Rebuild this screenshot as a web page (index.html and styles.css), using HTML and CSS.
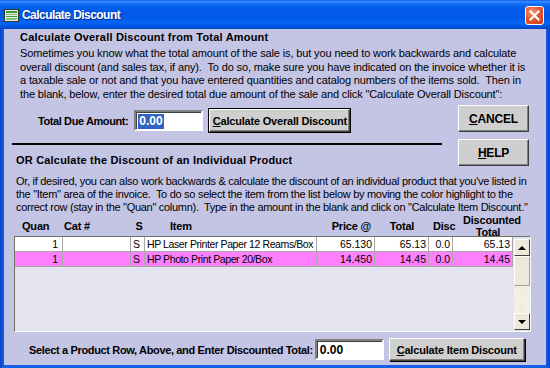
FILE: index.html
```html
<!DOCTYPE html>
<html lang="en">
<head>
  <meta charset="UTF-8">
  <title>Calculate Discount</title>
  <link rel="stylesheet" href="styles.css">
</head>
<body>
  <div class="window">
    <div class="titlebar">
      <svg class="app-icon" width="15" height="13" viewBox="0 0 15 13">
        <rect x="0.5" y="0.5" width="14" height="12" fill="#e8f0e0" stroke="#2a3a2a"/>
        <rect x="2" y="2" width="11" height="2" fill="#3c9a3c"/>
        <rect x="2" y="5" width="11" height="1" fill="#7cc07c"/>
        <rect x="2" y="7" width="11" height="1" fill="#3c9a3c"/>
        <rect x="2" y="9" width="11" height="2" fill="#7cc07c"/>
      </svg>
      <span class="title">Calculate Discount</span>
      <div class="close">
        <svg width="11" height="11" viewBox="0 0 11 11">
          <path d="M1.5 1.5 L9.5 9.5 M9.5 1.5 L1.5 9.5" stroke="#fff" stroke-width="2.2" stroke-linecap="square"/>
        </svg>
      </div>
    </div>

    <div class="client">
      <h1 class="heading heading-top">Calculate Overall Discount from Total Amount</h1>
      <p class="intro intro-top">
        Sometimes you know what the total amount of the sale is, but you need to work backwards and calculate<br>
        overall discount (and sales tax, if any).&nbsp; To do so, make sure you have indicated on the invoice whether it is<br>
        a taxable sale or not and that you have entered quantities and catalog numbers of the items sold.&nbsp; Then in<br>
        the blank, below, enter the desired total due amount of the sale and click "Calculate Overall Discount":
      </p>

      <div class="middle">
        <div class="middle-left">
          <div class="due-row">
            <span class="field-label">Total Due Amount:</span>
            <div class="field"><span class="selected">0.00</span></div>
            <button class="btn btn-default"><u>C</u>alculate Overall Discount</button>
          </div>
          <div class="separator"></div>
          <h2 class="heading heading-item">OR Calculate the Discount of an Individual Product</h2>
        </div>
        <div class="side-buttons">
          <button class="btn btn-side"><u>C</u>ANCEL</button>
          <button class="btn btn-side"><u>H</u>ELP</button>
        </div>
      </div>

      <p class="intro intro-item">
        Or, if desired, you can also work backwards &amp; calculate the discount of an individual product that you've listed in<br>
        the "Item" area of the invoice.&nbsp; To do so select the item from the list below by moving the color highlight to the<br>
        correct row (stay in the "Quan" column).&nbsp; Type in the amount in the blank and click on "Calculate Item Discount."
      </p>

      <div class="grid-head">
        <span class="col-quan">Quan</span>
        <span class="col-cat">Cat #</span>
        <span class="col-s">S</span>
        <span class="col-item">Item</span>
        <span class="col-price">Price @</span>
        <span class="col-total">Total</span>
        <span class="col-disc">Disc</span>
        <span class="col-dtotal">Discounted<br>Total</span>
      </div>

      <div class="list">
        <div class="rows">
          <div class="row">
            <span class="cell num">1</span>
            <span class="cell"></span>
            <span class="cell">S</span>
            <span class="cell">HP Laser Printer Paper 12 Reams/Box</span>
            <span class="cell num">65.130</span>
            <span class="cell num">65.13</span>
            <span class="cell num">0.0</span>
            <span class="cell num">65.13</span>
          </div>
          <div class="row row-selected">
            <span class="cell num">1</span>
            <span class="cell"></span>
            <span class="cell">S</span>
            <span class="cell">HP Photo Print Paper 20/Box</span>
            <span class="cell num">14.450</span>
            <span class="cell num">14.45</span>
            <span class="cell num">0.0</span>
            <span class="cell num">14.45</span>
          </div>
        </div>
        <div class="scrollbar">
          <div class="scroll-btn"><span class="arrow-up"></span></div>
          <div class="scroll-thumb"></div>
          <div class="scroll-track"></div>
          <div class="scroll-btn"><span class="arrow-down"></span></div>
        </div>
      </div>

      <div class="bottom-row">
        <span class="field-label">Select a Product Row, Above, and Enter Discounted Total:</span>
        <div class="field field-plain">0.00</div>
        <button class="btn btn-item"><u>C</u>alculate Item Discount</button>
      </div>
    </div>
  </div>
</body>
</html>
```

FILE: styles.css
```css
* {
  margin: 0;
  padding: 0;
  box-sizing: border-box;
}

body {
  font-family: "Liberation Sans", Arial, sans-serif;
  font-size: 11px;
  color: #000;
  background: #fff;
}

.window {
  width: 550px;
  height: 368px;
  display: flex;
  flex-direction: column;
  background: linear-gradient(90deg, #0842c8 0px, #1660e8 4px, #1660e8 546px, #0842c8 550px);
}

/* title bar */
.titlebar {
  height: 29px;
  display: flex;
  align-items: center;
  padding: 0 6px 0 4px;
  background: linear-gradient(#0a5ae8 0%, #3a8cff 6%, #1672f8 12%, #0462ee 20%, #0058e6 40%, #005ae9 60%, #0664f5 78%, #0058e4 90%, #0046c0 100%);
}

.app-icon {
  margin-right: 3px;
  margin-top: 1px;
}

.title {
  flex: 1;
  color: #fff;
  font-weight: bold;
  font-size: 12px;
  letter-spacing: -0.55px;
  text-shadow: 1px 1px #0a2a8a;
}

.close {
  width: 19px;
  height: 19px;
  margin-top: 1px;
  border: 1px solid #fff;
  border-radius: 3px;
  background: radial-gradient(circle at 35% 30%, #f59a7a 0%, #e5562e 45%, #c8401c 100%);
  display: flex;
  align-items: center;
  justify-content: center;
}

/* client area */
.client {
  flex: 1;
  margin: 0 4px 3px 4px;
  background: #c4c4e4;
  padding: 1px 0 0 8px;
  display: flex;
  flex-direction: column;
}

.heading {
  font-size: 11px;
  font-weight: bold;
  letter-spacing: 0.2px;
  line-height: 14px;
}

.heading-top {
  margin-left: 8px;
}

.intro {
  white-space: nowrap;
  line-height: 13.5px;
}

.intro-top {
  margin: 3px 0 0 8px;
  letter-spacing: -0.13px;
}

.middle {
  display: flex;
  margin-top: 4px;
}

.middle-left {
  width: 430px;
}

.due-row {
  display: flex;
  align-items: center;
  margin-top: 4px;
}

.due-row .field-label {
  margin-left: 26px;
  margin-right: 6px;
  letter-spacing: -0.4px;
}

.field-label {
  font-weight: bold;
  letter-spacing: -0.35px;
}

.field {
  width: 69px;
  height: 21px;
  background: #fff;
  border: 2px solid;
  border-color: #808080 #fff #fff #808080;
  box-shadow: inset 1px 1px #404040;
  padding: 2px 2px;
  font-weight: bold;
  font-size: 12px;
  line-height: 15px;
}

.selected {
  background: #3163c5;
  color: #fff;
  display: inline-block;
  padding: 0 1px;
}

.btn {
  font-family: "Liberation Sans", Arial, sans-serif;
  font-size: 11px;
  font-weight: bold;
  background: #cfcfcf;
  color: #000;
  border: 1px solid;
  border-color: #fff #404040 #404040 #fff;
  box-shadow: inset -1px -1px #808080;
  letter-spacing: -0.2px;
}

.btn-default {
  width: 141px;
  height: 23px;
  margin-left: 6px;
  box-shadow: inset -1px -1px #808080, 0 0 0 1px #000;
}

.separator {
  height: 2px;
  margin-top: 11px;
  background: #000;
}

.heading-item {
  margin: 8px 0 0 4px;
}

.side-buttons {
  margin-left: 16px;
  display: flex;
  flex-direction: column;
  gap: 7px;
}

.btn-side {
  width: 71px;
  height: 27px;
  font-size: 12px;
}

.intro-item {
  margin: 8px 0 0 4px;
  line-height: 13px;
  letter-spacing: -0.29px;
}

/* product grid */
.grid-head {
  display: grid;
  grid-template-columns: 48px 68px 14px 172px 58px 54px 24px 60px;
  margin: 0 0 0 3px;
  height: 22px;
  align-items: center;
  font-weight: bold;
  line-height: 12px;
  letter-spacing: -0.2px;
}

.col-quan {
  padding-left: 7px;
}

.col-cat {
  padding-left: 1px;
}

.col-s {
  text-align: center;
  padding-left: 2px;
}

.col-item {
  padding-left: 25px;
}

.col-price {
  text-align: right;
  padding-right: 4px;
}

.col-total {
  text-align: center;
}

.col-disc {
  text-align: center;
  white-space: nowrap;
  padding-left: 4px;
}

.col-dtotal {
  text-align: center;
  white-space: nowrap;
  padding-left: 10px;
}

.list {
  display: flex;
  width: 517px;
  height: 96px;
  margin-left: 2px;
  background: #e4e4f0;
  border: 1px solid;
  border-color: #707060 #fff #fff #707060;
}

.rows {
  width: 498px;
}

.row {
  display: grid;
  grid-template-columns: 48px 68px 14px 172px 58px 54px 24px 60px;
  height: 15px;
  background: #fff;
  border-bottom: 1px solid #a8a8a8;
}

.row-selected {
  background: #ff80ff;
}

.cell {
  border-right: 1px solid #a8a8a8;
  padding: 0 2px;
  font-size: 10.5px;
  letter-spacing: -0.4px;
  line-height: 14px;
  white-space: nowrap;
  overflow: hidden;
}

.cell.num {
  text-align: right;
  letter-spacing: 0;
}

.row .cell:first-child {
  padding-right: 4px;
}

.scrollbar {
  width: 16px;
  margin: 2px 0 1px 1px;
  display: flex;
  flex-direction: column;
  background: #f4f2e6;
}

.scroll-btn {
  height: 17px;
  background: #ece9d8;
  border: 1px solid;
  border-color: #fff #404040 #404040 #fff;
  display: flex;
  align-items: center;
  justify-content: center;
}

.scroll-thumb {
  height: 30px;
  background: #ece9d8;
  border: 1px solid;
  border-color: #fff #a0a090 #a0a090 #fff;
}

.scroll-track {
  flex: 1;
  background: repeating-linear-gradient(45deg, #f6f4ea 0 1px, #ecead8 1px 2px);
}

.arrow-up {
  border-left: 4px solid transparent;
  border-right: 4px solid transparent;
  border-bottom: 4px solid #000;
}

.arrow-down {
  border-left: 4px solid transparent;
  border-right: 4px solid transparent;
  border-top: 4px solid #000;
}

.bottom-row {
  display: flex;
  align-items: center;
  margin-top: 6px;
}

.bottom-row .field-label {
  margin-left: 17px;
  margin-right: 2px;
}

.field-plain {
  padding: 2px 3px;
}

.btn-item {
  width: 136px;
  height: 23px;
  margin-left: 5px;
  box-shadow: inset -1px -1px #808080, 1px 1px 0 0 #000;
}
```
